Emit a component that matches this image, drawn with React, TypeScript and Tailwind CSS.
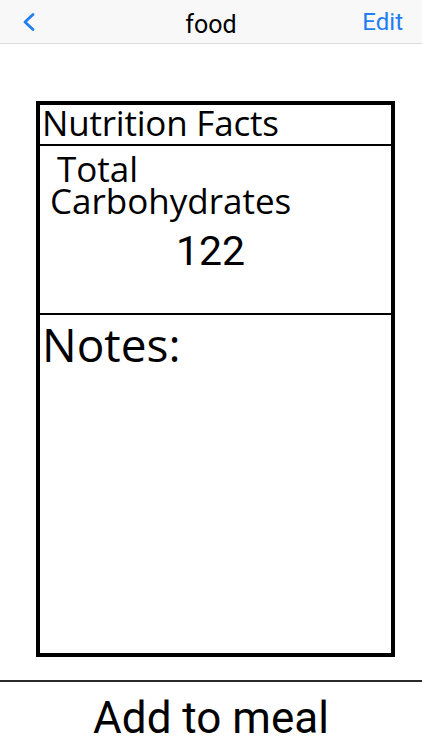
import React from "react"

function BackChevron() {
  return (
    <svg width="16" height="20" viewBox="0 0 16 20" fill="none" stroke="#1f7ef4" strokeWidth={2.8} strokeLinecap="round" strokeLinejoin="round">
      <path d="M12 2.5L4 10l8 7.5" />
    </svg>
  )
}

export default function App() {
  return (
    <div className="w-[422px] h-[750px] bg-white flex flex-col overflow-hidden">
      {/* Nav bar */}
      <header className="relative h-[44px] shrink-0 bg-[#f8f8f8] border-b border-[#dcdcdc] flex items-center justify-between px-[21px] font-['Roboto',sans-serif]">
        <BackChevron />
        <span className="absolute left-0 right-0 text-center text-[25px] text-black pointer-events-none leading-none top-[12px]">food</span>
        <span className="text-[24px] text-[#1f7ef4] leading-none mr-[-2px]">Edit</span>
      </header>

      {/* Label card */}
      <main className="flex-1 pt-[57px]">
        <div className="ml-[36px] w-[359px] h-[556px] border-4 border-black flex flex-col font-['Open_Sans',sans-serif] text-black">
          <div className="h-[41px] border-b-2 border-black pl-[2px] flex items-end">
            <span className="text-[35px] leading-[42px] tracking-[-0.2px]">Nutrition Facts</span>
          </div>
          <div className="h-[169px] border-b-2 border-black flex flex-col">
            <div className="pt-[7px] text-[35px] leading-[32px] tracking-[0px]">
              <div className="pl-[17px]">Total</div>
              <div className="pl-[10px]">Carbohydrates</div>
            </div>
            <div className="mt-[14px] text-center text-[41px] leading-none font-['Roboto',sans-serif] pr-[10px]">122</div>
          </div>
          <div className="flex-1 pl-[2px] pt-[4px]">
            <span className="text-[46px] leading-[50px]">Notes:</span>
          </div>
        </div>
      </main>

      {/* Bottom action */}
      <footer className="h-[70px] shrink-0 border-t-2 border-[#2a2a2a] flex items-center justify-center">
        <span className="text-[44px] leading-none text-black font-['Roboto',sans-serif] pt-[4px]">Add to meal</span>
      </footer>
    </div>
  )
}
